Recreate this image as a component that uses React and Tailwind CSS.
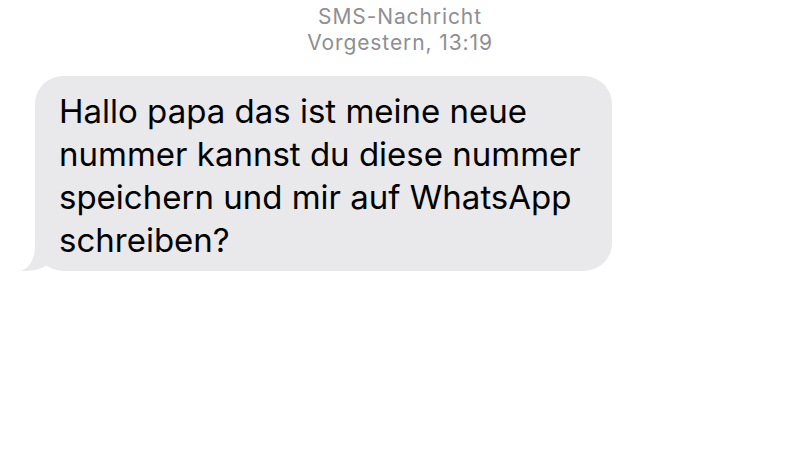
export default function App() {
  return (
    <div className="w-[800px] h-[450px] bg-white overflow-hidden" style={{ fontFamily: "Inter, 'Liberation Sans', sans-serif" }}>
      <div className="flex flex-col items-center pt-[4px] text-[#8e8e93] text-[21px] leading-[26px] tracking-[0.9px]">
        <div>SMS-Nachricht</div>
        <div>Vorgestern, 13:19</div>
      </div>
      <div className="mt-[20px] ml-[35px] relative w-[577px]">
        <svg className="absolute left-[-14px] bottom-0" width="30" height="26" viewBox="0 0 30 26">
          <path d="M14 0 C14 12 10 22 0 26 C10 26 19 25 26 20 L30 0 Z" fill="#e9e9eb" />
        </svg>
        <div className="relative bg-[#e9e9eb] rounded-[28px] pl-[24px] pr-[20px] pt-[14px] pb-[9px] text-[33px] leading-[43px] text-black">
          Hallo papa das ist meine neue<br />
          nummer kannst du diese nummer<br />
          speichern und mir auf WhatsApp<br />
          schreiben?
        </div>
      </div>
    </div>
  );
}
